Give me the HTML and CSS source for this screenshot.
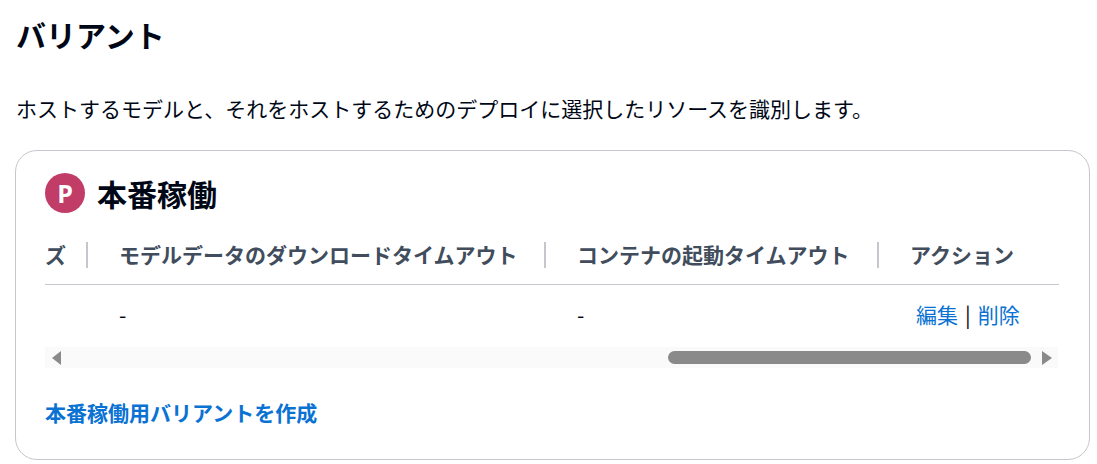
FILE: index.html
```html
<!DOCTYPE html>
<html lang="ja">
<head>
<meta charset="utf-8">
<title>バリアント</title>
<link rel="stylesheet" href="styles.css">
</head>
<body>
<div class="page">
  <h1 class="title">バリアント</h1>
  <p class="desc">ホストするモデルと、それをホストするためのデプロイに選択したリソースを識別します。</p>
  <section class="card">
    <div class="card-head">
      <span class="badge">P</span>
      <h2 class="card-title">本番稼働</h2>
    </div>
    <div class="table">
      <div class="row head">
        <div class="cell c1">ズ</div>
        <div class="cell c2 sep">モデルデータのダウンロードタイムアウト</div>
        <div class="cell c3 sep">コンテナの起動タイムアウト</div>
        <div class="cell c4 sep">アクション</div>
      </div>
      <div class="row body">
        <div class="cell c1"></div>
        <div class="cell c2">-</div>
        <div class="cell c3">-</div>
        <div class="cell c4 actions"><a class="link" href="#">編集</a><span class="bar">|</span><a class="link" href="#">削除</a></div>
      </div>
    </div>
    <div class="scrollbar">
      <span class="arrow left"></span>
      <div class="track"><div class="thumb"></div></div>
      <span class="arrow right"></span>
    </div>
    <a class="create" href="#">本番稼働用バリアントを作成</a>
  </section>
</div>
</body>
</html>
```

FILE: styles.css
```css
* { box-sizing: border-box; }
html, body { margin: 0; padding: 0; background: #ffffff; }
body {
  font-family: "Noto Sans CJK JP", "Noto Sans", sans-serif;
  color: #000716;
  width: 1097px;
  height: 464px;
  overflow: hidden;
}
.page { padding: 0 0 0 16px; }
.title {
  margin: 16px 0 0 0;
  font-size: 30px;
  line-height: 36px;
  font-weight: 700;
}
.desc {
  margin: 41px 0 0 0;
  font-size: 21px;
  line-height: 30px;
}
.card {
  margin: 27px 0 0 -1px;
  width: 1075px;
  height: 310px;
  border: 1px solid #c6c6cd;
  border-radius: 22px;
  padding: 22px 30px 0 29px;
}
.card-head {
  display: flex;
  align-items: center;
  gap: 12px;
  height: 40px;
}
.badge {
  width: 40px;
  height: 40px;
  border-radius: 50%;
  background: #c23c68;
  color: #ffffff;
  font-family: "Open Sans", "Noto Sans", sans-serif;
  font-weight: 700;
  font-size: 25px;
  display: flex;
  align-items: center;
  justify-content: center;
}
.card-title {
  margin: 0;
  font-size: 30px;
  line-height: 40px;
  font-weight: 700;
}
.table { margin-top: 26px; width: 1014px; }
.row { display: flex; }
.row.head {
  border-bottom: 1px solid #c6c6cd;
  padding-bottom: 15px;
  color: #414d5c;
  font-weight: 700;
}
.row.body { padding: 14px 0 18px 0; }
.cell {
  font-size: 21px;
  line-height: 30px;
  white-space: nowrap;
  overflow: hidden;
  position: relative;
  padding-left: 33px;
}
.c1 { width: 41px; padding-left: 0; }
.c2 { width: 458px; }
.c3 { width: 333px; }
.c4 { width: 182px; }
.sep::before {
  content: "";
  position: absolute;
  left: 0;
  top: 3px;
  width: 2px;
  height: 26px;
  background: #c6c6cd;
}
.actions { padding-left: 39px; }
.link { color: #0972d3; text-decoration: none; }
.bar { color: #000716; margin: 0 7px; }
.scrollbar {
  display: flex;
  align-items: center;
  width: 1013px;
  height: 21px;
  background: #fafafa;
  padding: 0 6px 0 7px;
}
.arrow {
  width: 0;
  height: 0;
  border-top: 7px solid transparent;
  border-bottom: 7px solid transparent;
  flex: none;
}
.arrow.left { border-right: 9px solid #8a8a8a; }
.arrow.right { border-left: 10px solid #8a8a8a; }
.track {
  flex: 1;
  height: 13px;
  display: flex;
  padding: 0 11px;
  justify-content: flex-end;
}
.thumb {
  width: 363px;
  height: 13px;
  border-radius: 7px;
  background: #8a8a8a;
}
.create {
  display: inline-block;
  margin-top: 29px;
  font-size: 21px;
  line-height: 30px;
  font-weight: 700;
  color: #0972d3;
  text-decoration: none;
}
```
